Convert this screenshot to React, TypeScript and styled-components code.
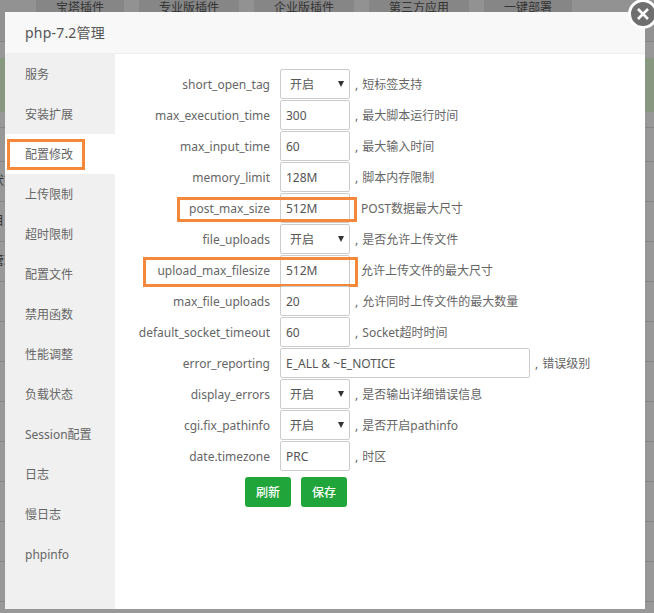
import { createGlobalStyle, styled } from "styled-components";

const GlobalStyle = createGlobalStyle`
  html, body { margin: 0; padding: 0; }
  body {
    width: 654px;
    height: 613px;
    overflow: hidden;
    font-family: "Noto Sans", "Noto Sans CJK SC", sans-serif;
    font-size: 12px;
    color: #666;
  }
`;

const Page = styled.div`
  position: relative;
  width: 654px;
  height: 613px;
  overflow: hidden;
  background: #989898;
`;

// everything behind the dimmed overlay
const TabBar = styled.div`
  display: flex;
  gap: 15px;
  padding-left: 36px;
  height: 42px;
  box-sizing: border-box;
  overflow: hidden;
  background: #929292;
  border-bottom: 1px solid #858585;
`;

const Tab = styled.div`
  padding: 0 20px;
  height: 30px;
  background: #868686;
  color: #333;
  font-size: 12px;
  line-height: 15px;
  white-space: nowrap;
`;

const BackGap = styled.div`
  height: 16px;
`;

const BackBand = styled.div`
  height: 54px;
  background: #88977f;
`;

const BackRow = styled.div<{ $h: number }>`
  height: ${(p) => p.$h}px;
  box-sizing: border-box;
  line-height: ${(p) => p.$h - 2}px;
  border-bottom: 1px solid #858585;
  overflow: hidden;
  white-space: nowrap;
`;

const BackText = styled.span<{ $blue?: boolean }>`
  margin-left: -8px;
  color: ${(p) => (p.$blue ? "#3a6a96" : "#333")};
`;

const Modal = styled.div`
  position: absolute;
  left: 5px;
  top: 12px;
  width: 640px;
  height: 597px;
  background: #fff;
  display: flex;
  flex-direction: column;
`;

const Header = styled.div`
  height: 41px;
  flex: none;
  padding-left: 20px;
  line-height: 42px;
  font-size: 14px;
  letter-spacing: 0.2px;
  color: #555;
  background: #f8f8f8;
  border-bottom: 1px solid #eee;
`;

const Close = styled.div`
  position: absolute;
  right: -13px;
  top: -13px;
  width: 30px;
  height: 30px;
  box-sizing: border-box;
  border-radius: 50%;
  background: #6f6f6f;
  border: 3px solid #fff;
  display: flex;
  align-items: center;
  justify-content: center;
`;

const Body = styled.div`
  flex: 1;
  display: flex;
`;

const Side = styled.div`
  width: 110px;
  flex: none;
  background: #f0f0f0;
`;

const SideItem = styled.div<{ $active?: boolean }>`
  position: relative;
  height: 40px;
  line-height: 42px;
  padding-left: 20px;
  background: ${(p) => (p.$active ? "#fff" : "transparent")};
`;

const SideMark = styled.span`
  position: absolute;
  left: 2px;
  top: 5px;
  width: 78px;
  height: 31px;
  box-sizing: border-box;
  border: 3px solid #f5883a;
`;

const Form = styled.div`
  flex: 1;
  padding-top: 15px;
  display: flex;
  flex-direction: column;
  gap: 1px;
`;

const Row = styled.div`
  position: relative;
  display: flex;
  align-items: center;
  height: 30px;
`;

const Label = styled.div`
  width: 155px;
  flex: none;
  text-align: right;
  margin-right: 10px;
  white-space: nowrap;
`;

const Field = styled.div<{ $wide?: boolean }>`
  width: ${(p) => (p.$wide ? "250px" : "70px")};
  height: 30px;
  flex: none;
  box-sizing: border-box;
  border: 1px solid #ccc;
  border-radius: 2px;
  line-height: 29px;
  padding-left: 5px;
  background: #fff;
  display: flex;
  justify-content: space-between;
  color: #555;
`;

const SelectText = styled.span`
  padding-left: 4px;
`;

const Caret = styled.span`
  width: 0;
  height: 0;
  margin: 11px 5px 0 0;
  border-left: 3.5px solid transparent;
  border-right: 3.5px solid transparent;
  border-top: 6px solid #333;
`;

const Note = styled.div<{ $bare?: boolean }>`
  margin-left: ${(p) => (p.$bare ? 11 : 5)}px;
  word-spacing: 1px;
  white-space: nowrap;
`;

const RowMark = styled.span<{ $left: number; $width: number; $top: number; $height: number }>`
  position: absolute;
  left: ${(p) => p.$left}px;
  width: ${(p) => p.$width}px;
  top: ${(p) => p.$top}px;
  height: ${(p) => p.$height}px;
  box-sizing: border-box;
  border: 3px solid #f5883a;
`;

const Buttons = styled.div`
  display: flex;
  gap: 10px;
  margin: 5px 0 0 130px;
`;

const Button = styled.div`
  width: 46px;
  height: 30px;
  border-radius: 3px;
  background: #20a53a;
  color: #fff;
  font-weight: 500;
  text-align: center;
  line-height: 31px;
`;

type RowData = {
  name: string;
  value: string;
  note: string;
  select?: boolean;
  wide?: boolean;
  mark?: [number, number, number, number];
};

const rows: RowData[] = [
  { name: "short_open_tag", value: "开启", note: ", 短标签支持", select: true },
  { name: "max_execution_time", value: "300", note: ", 最大脚本运行时间" },
  { name: "max_input_time", value: "60", note: ", 最大输入时间" },
  { name: "memory_limit", value: "128M", note: ", 脚本内存限制" },
  { name: "post_max_size", value: "512M", note: "POST数据最大尺寸", mark: [62, 180, 4, 25] },
  { name: "file_uploads", value: "开启", note: ", 是否允许上传文件", select: true },
  { name: "upload_max_filesize", value: "512M", note: "允许上传文件的最大尺寸", mark: [28, 215, 2, 30] },
  { name: "max_file_uploads", value: "20", note: ", 允许同时上传文件的最大数量" },
  { name: "default_socket_timeout", value: "60", note: ", Socket超时时间" },
  { name: "error_reporting", value: "E_ALL & ~E_NOTICE", note: ", 错误级别", wide: true },
  { name: "display_errors", value: "开启", note: ", 是否输出详细错误信息", select: true },
  { name: "cgi.fix_pathinfo", value: "开启", note: ", 是否开启pathinfo", select: true },
  { name: "date.timezone", value: "PRC", note: ", 时区" },
];

const menu = ["服务", "安装扩展", "配置修改", "上传限制", "超时限制", "配置文件", "禁用函数", "性能调整", "负载状态", "Session配置", "日志", "慢日志", "phpinfo"];

// clipped words of the page under the overlay, only their ends show at the left edge
const backRows = ["状态", "目录", "管理", ".", ".", ".", ".", ".", ".", ".", "."];

export default function App() {
  return (
    <Page>
      <GlobalStyle />
      <TabBar>
        {["宝塔插件", "专业版插件", "企业版插件", "第三方应用", "一键部署"].map((t) => (
          <Tab key={t}>{t}</Tab>
        ))}
      </TabBar>
      <BackGap />
      <BackBand />
      <BackRow $h={16} />
      <BackRow $h={34} />
      {backRows.map((t, i) => (
        <BackRow key={i} $h={40}>
          <BackText $blue={t === "."}>{t}</BackText>
        </BackRow>
      ))}
      <Modal>
        <Header>php-7.2管理</Header>
        <Close>
          <svg width="14" height="14" viewBox="0 0 14 14">
            <path d="M2 2L12 12M12 2L2 12" stroke="#fff" strokeWidth="2.6" />
          </svg>
        </Close>
        <Body>
          <Side>
            {menu.map((m) => (
              <SideItem key={m} $active={m === "配置修改"}>
                {m}
                {m === "配置修改" && <SideMark />}
              </SideItem>
            ))}
          </Side>
          <Form>
            {rows.map((r) => (
              <Row key={r.name}>
                <Label>{r.name}</Label>
                <Field $wide={r.wide}>
                  {r.select ? <SelectText>{r.value}</SelectText> : r.value}
                  {r.select && <Caret />}
                </Field>
                <Note $bare={!r.note.startsWith(",")}>{r.note}</Note>
                {r.mark && <RowMark $left={r.mark[0]} $width={r.mark[1]} $top={r.mark[2]} $height={r.mark[3]} />}
              </Row>
            ))}
            <Buttons>
              <Button>刷新</Button>
              <Button>保存</Button>
            </Buttons>
          </Form>
        </Body>
      </Modal>
    </Page>
  );
}
